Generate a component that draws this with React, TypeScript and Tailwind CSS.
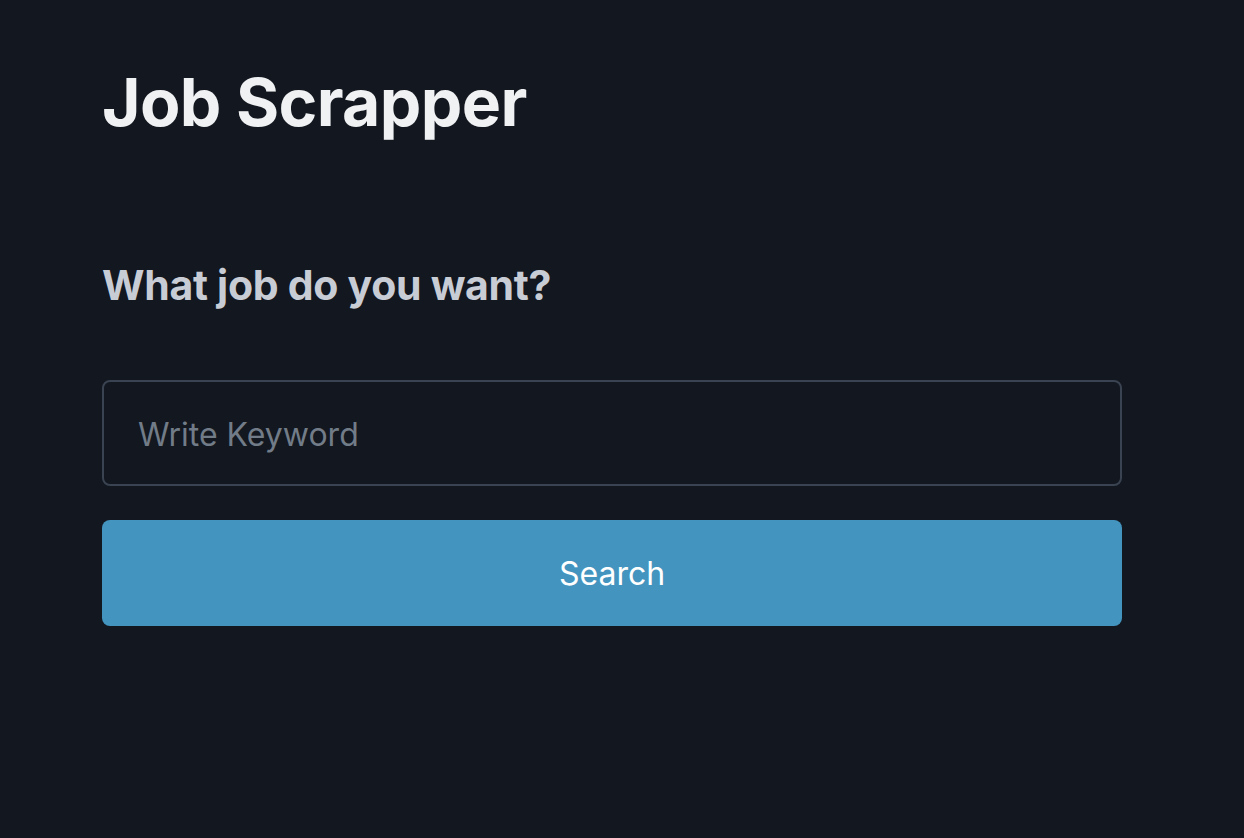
import React from 'react'

export default function App() {
  return (
    <div className="min-h-[838px] w-full bg-[#13171f] font-['Inter',sans-serif]">
      <main className="ml-[102px] w-[1020px] pt-[62px]">
        {/* Header */}
        <h1 className="text-[66px] font-bold leading-[80px] tracking-[-0.6px] text-[#f0f1f3]">
          Job Scrapper
        </h1>

        {/* Search form */}
        <section className="mt-[118px]">
          <h2 className="text-[41px] font-bold leading-[50px] tracking-[-0.3px] text-[#c8ccd5]">
            What job do you want?
          </h2>
          <form className="mt-[70px] flex flex-col gap-[34px]" onSubmit={(e) => e.preventDefault()}>
            <input
              type="text"
              placeholder="Write Keyword"
              className="h-[106px] w-full rounded-[8px] border-2 border-[#394351] bg-[#13171f] px-[34px] pt-[2px] text-[32px] text-[#e0e3e7] outline-none placeholder:text-[#717c88]"
            />
            <button
              type="submit"
              className="h-[106px] w-full rounded-[8px] bg-[#4395bf] pt-[2px] text-[32px] font-normal text-white"
            >
              Search
            </button>
          </form>
        </section>
      </main>
    </div>
  )
}
